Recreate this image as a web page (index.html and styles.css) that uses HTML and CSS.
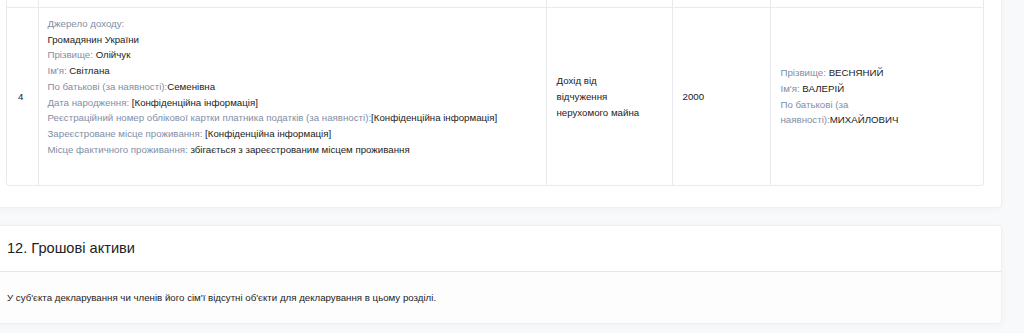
FILE: index.html
```html
<!DOCTYPE html>
<html lang="uk">
<head>
<meta charset="utf-8">
<link rel="stylesheet" href="styles.css">
</head>
<body>
<div class="page">
  <section class="card card-table">
    <div class="table-wrap">
      <table class="decl">
        <colgroup>
          <col class="c1"><col class="c2"><col class="c3"><col class="c4"><col class="c5">
        </colgroup>
        <tr class="prev"><td></td><td></td><td></td><td></td><td></td></tr>
        <tr>
          <td class="num">4</td>
          <td class="src">
            <div><span class="lbl">Джерело доходу:</span></div>
            <div>Громадянин України</div>
            <div><span class="lbl">Прізвище: </span>Олійчук</div>
            <div><span class="lbl">Ім'я: </span>Світлана</div>
            <div><span class="lbl">По батькові (за наявності):</span>Семенівна</div>
            <div><span class="lbl">Дата народження: </span>[Конфіденційна інформація]</div>
            <div><span class="lbl">Реєстраційний номер облікової картки платника податків (за наявності):</span>[Конфіденційна інформація]</div>
            <div><span class="lbl">Зареєстроване місце проживання: </span>[Конфіденційна інформація]</div>
            <div><span class="lbl">Місце фактичного проживання: </span>збігається з зареєстрованим місцем проживання</div>
          </td>
          <td class="mid"><div class="type">Дохід від відчуження нерухомого майна</div></td>
          <td class="mid">2000</td>
          <td class="mid"><div class="person"><div><span class="lbl">Прізвище: </span>ВЕСНЯНИЙ</div><div><span class="lbl">Ім'я: </span>ВАЛЕРІЙ</div><div><span class="lbl">По батькові (за наявності):</span>МИХАЙЛОВИЧ</div></div></td>
        </tr>
      </table>
    </div>
  </section>

  <section class="card">
    <h2 class="card-title">12. Грошові активи</h2>
    <div class="card-body">У суб'єкта декларування чи членів його сім'ї відсутні об'єкти для декларування в цьому розділі.</div>
  </section>
</div>
</body>
</html>
```

FILE: styles.css
```css
html, body {
  margin: 0;
  padding: 0;
}
body {
  background: #f8f9fb;
  font-family: "Liberation Sans", Arial, sans-serif;
  font-size: 9.7px;
  line-height: 15.7px;
  color: #222;
  overflow: hidden;
}
.page {
  width: 1013px;
  margin-left: -11px;
}
.card {
  background: #fff;
  border: 1px solid #eef0f4;
  border-radius: 4px;
  box-shadow: 0 1px 6px rgba(0, 0, 0, 0.035);
  margin-bottom: 17px;
}
.card-table {
  margin-top: -34px;
  padding: 0 17px 21px 16px;
}
.table-wrap {
  border: 1px solid #e8eaee;
  border-top: none;
  border-radius: 0 0 4px 4px;
  overflow: hidden;
}
.decl {
  width: 100%;
  border-collapse: collapse;
  table-layout: fixed;
}
.c1 { width: 31px; }
.c2 { width: 508px; }
.c3 { width: 126px; }
.c4 { width: 98px; }
.decl td {
  border: 1px solid #e8eaee;
  padding: 0 10px;
  vertical-align: middle;
}
.decl tr td:first-child { border-left: none; }
.decl tr td:last-child { border-right: none; }
.decl tr:last-child td { border-bottom: none; }
.decl .prev td {
  height: 40px;
  border-top: none;
}
.decl td.num {
  padding: 0 0 0 11px;
}
.decl td.src {
  padding: 8px 9px 28px 9px;
}
.type {
  max-width: 92px;
}
.person {
  max-width: 125px;
}
.lbl {
  color: #7f8ea6;
}
.card-title {
  margin: 0;
  font-size: 14.6px;
  font-weight: normal;
  line-height: 20px;
  color: #222;
  padding: 12px 17px 13px;
  border-bottom: 1px solid #e6e7ea;
}
.card-body {
  background: #fdfdfd;
  padding: 18px 17px 17px;
  border-radius: 0 0 4px 4px;
}
```
